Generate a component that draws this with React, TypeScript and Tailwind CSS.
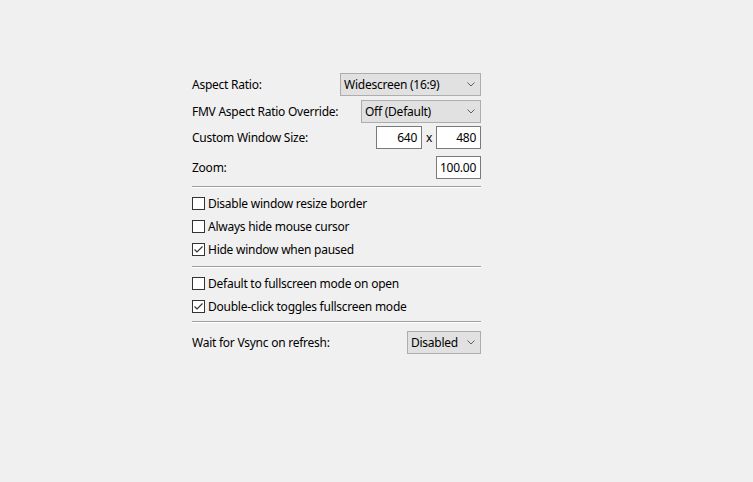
import React from 'react';

const font = { fontFamily: '"Noto Sans", "Liberation Sans", sans-serif', letterSpacing: '-0.25px' };

function Chevron() {
  return (
    <svg width="8" height="5" viewBox="0 0 8 5" className="shrink-0">
      <path d="M0.5 0.5 L4 4 L7.5 0.5" fill="none" stroke="#606060" strokeWidth="1" />
    </svg>
  );
}

function Combo({ value, width }: { value: string; width: string }) {
  return (
    <div
      className={`${width} h-[23px] flex items-center justify-between border border-[#adadad] bg-[#e1e1e1] pl-[3px] pr-[5px] text-[12px] text-black`}
    >
      <span>{value}</span>
      <Chevron />
    </div>
  );
}

function NumBox({ value, width }: { value: string; width: string }) {
  return (
    <div
      className={`${width} h-[23px] flex items-center justify-end border border-[#7a7a7a] bg-white pr-[4px] text-[12px] text-black`}
    >
      {value}
    </div>
  );
}

function Separator() {
  return <div className="border-t border-[#a0a0a0] border-b border-b-white" />;
}

function Check({ label, checked }: { label: string; checked?: boolean }) {
  return (
    <div className="h-[23px] flex items-center gap-[3px]">
      <div className="w-[13px] h-[13px] border border-[#333333] bg-white flex items-center justify-center">
        {checked && (
          <svg width="11" height="11" viewBox="0 0 11 11">
            <path d="M1.5 5.5 L4 8 L9.5 2.5" fill="none" stroke="#333333" strokeWidth="1.2" />
          </svg>
        )}
      </div>
      <span>{label}</span>
    </div>
  );
}

export default function App() {
  return (
    <div className="w-[753px] h-[482px] bg-[#f0f0f0] pt-[73px] pl-[192px] text-[12px] text-black" style={font}>
      <div className="w-[289px] flex flex-col">
        <div className="h-[23px] flex items-center justify-between">
          <span>Aspect Ratio:</span>
          <Combo value="Widescreen (16:9)" width="w-[141px]" />
        </div>
        <div className="mt-[4px] h-[23px] flex items-center justify-between">
          <span>FMV Aspect Ratio Override:</span>
          <Combo value="Off (Default)" width="w-[120px]" />
        </div>
        <div className="mt-[3px] h-[23px] flex items-center justify-between">
          <span>Custom Window Size:</span>
          <div className="flex items-center">
            <NumBox value="640" width="w-[46px]" />
            <span className="w-[14px] text-center">x</span>
            <NumBox value="480" width="w-[45px]" />
          </div>
        </div>
        <div className="mt-[7px] h-[23px] flex items-center justify-between">
          <span>Zoom:</span>
          <NumBox value="100.00" width="w-[45px]" />
        </div>
        <div className="mt-[7px]">
          <Separator />
        </div>
        <div className="mt-[4px] flex flex-col">
          <Check label="Disable window resize border" />
          <Check label="Always hide mouse cursor" />
          <Check label="Hide window when paused" checked />
        </div>
        <div className="mt-[5px]">
          <Separator />
        </div>
        <div className="mt-[4px] flex flex-col">
          <Check label="Default to fullscreen mode on open" />
          <Check label="Double-click toggles fullscreen mode" checked />
        </div>
        <div className="mt-[3px]">
          <Separator />
        </div>
        <div className="mt-[8px] h-[23px] flex items-center justify-between">
          <span>Wait for Vsync on refresh:</span>
          <Combo value="Disabled" width="w-[74px]" />
        </div>
      </div>
    </div>
  );
}
